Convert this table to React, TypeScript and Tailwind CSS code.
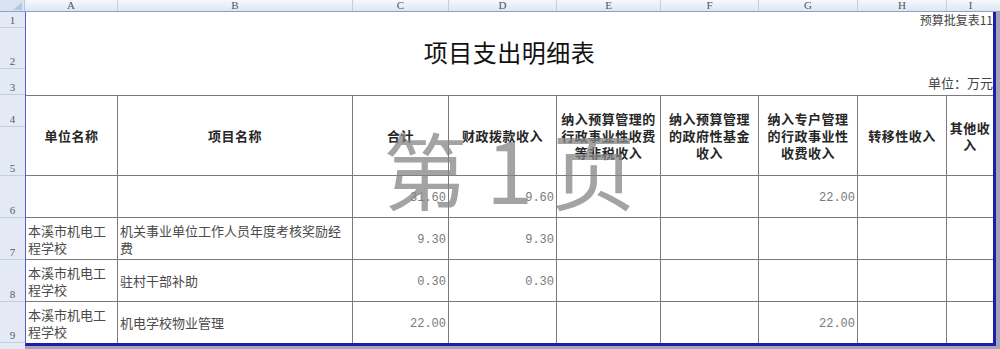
import React from "react";

const cjk = { fontFamily: '"Noto Sans CJK SC", "Noto Sans", sans-serif' };
const mono = { fontFamily: '"Liberation Mono", "DejaVu Sans Mono", monospace' };
const serif = { fontFamily: '"Liberation Serif", "DejaVu Serif", serif' };

const colHeaders: { label: string; w: string }[] = [
  { label: "A", w: "w-[93px]" },
  { label: "B", w: "w-[235px]" },
  { label: "C", w: "w-[96px]" },
  { label: "D", w: "w-[108px]" },
  { label: "E", w: "w-[104px]" },
  { label: "F", w: "w-[98px]" },
  { label: "G", w: "w-[99px]" },
  { label: "H", w: "w-[89px]" },
];

const rowHeaders: { label: string; h: string }[] = [
  { label: "1", h: "h-[16px]" },
  { label: "2", h: "h-[41px]" },
  { label: "3", h: "h-[26px]" },
  { label: "4", h: "h-[32px]" },
  { label: "5", h: "h-[49px]" },
  { label: "6", h: "h-[42px]" },
  { label: "7", h: "h-[42px]" },
  { label: "8", h: "h-[42px]" },
  { label: "9", h: "h-[41px]" },
];

type Row = {
  unit: string[];
  name: string[];
  c: string;
  d: string;
  g: string;
};

const rows: Row[] = [
  { unit: [], name: [], c: "31.60", d: "9.60", g: "22.00" },
  {
    unit: ["本溪市机电工", "程学校"],
    name: ["机关事业单位工作人员年度考核奖励经", "费"],
    c: "9.30",
    d: "9.30",
    g: "",
  },
  { unit: ["本溪市机电工", "程学校"], name: ["驻村干部补助"], c: "0.30", d: "0.30", g: "" },
  { unit: ["本溪市机电工", "程学校"], name: ["机电学校物业管理"], c: "22.00", d: "", g: "22.00" },
];

function HeadCell({ lines, last }: { lines: string[]; last?: boolean }) {
  return (
    <div
      className={`flex flex-col items-center justify-center border-t border-b border-[#7a7a7a] text-[13px] leading-[17px] font-bold text-[#262626] tracking-[0.5px] text-center ${
        last ? "" : "border-r"
      }`}
      style={cjk}
    >
      {lines.map((l, i) => (
        <span key={i} className="whitespace-nowrap">
          {l}
        </span>
      ))}
    </div>
  );
}

function TextCell({ lines, last, bottom }: { lines: string[]; last?: boolean; bottom?: boolean }) {
  return (
    <div
      className={`flex flex-col justify-center pl-[2px] text-[13px] leading-[17px] text-[#4a4a4a] border-[#7a7a7a] ${
        last ? "" : "border-r"
      } ${bottom ? "" : "border-b"}`}
      style={cjk}
    >
      {lines.map((l, i) => (
        <span key={i} className="whitespace-nowrap">
          {l}
        </span>
      ))}
    </div>
  );
}

function NumCell({ v, last, bottom }: { v: string; last?: boolean; bottom?: boolean }) {
  return (
    <div
      className={`flex items-center justify-end pr-[2px] pt-[2px] text-[12px] text-[#7a7a7a] border-[#7a7a7a] ${
        last ? "" : "border-r"
      } ${bottom ? "" : "border-b"}`}
      style={mono}
    >
      {v}
    </div>
  );
}

export default function App() {
  return (
    <div className="w-[1000px] h-[349px] bg-[#a4a4b8] flex flex-col overflow-hidden">
      {/* column header bar */}
      <div className="flex h-[12px] shrink-0 border-b border-[#8e9fc8] bg-gradient-to-b from-[#f6f9fd] to-[#dde6f1]">
        <div className="w-[25px] h-full border-r border-[#b9c7da] bg-[#d9e4f2] relative">
          <svg className="absolute right-[2px] bottom-[1px]" width="9" height="8" viewBox="0 0 9 8">
            <polygon points="9,0 9,8 0,8" fill="#b6c8de" />
          </svg>
        </div>
        {colHeaders.map((c) => (
          <div
            key={c.label}
            className={`${c.w} h-full border-r border-[#c3cfde] flex items-center justify-center text-[11px] leading-[11px] text-[#555]`}
            style={serif}
          >
            {c.label}
          </div>
        ))}
        <div
          className="flex-1 h-full flex items-center justify-center text-[11px] leading-[11px] text-[#555] pr-[6px]"
          style={serif}
        >
          I
        </div>
      </div>

      <div className="flex flex-1">
        {/* row headers */}
        <div className="w-[25px] flex flex-col bg-[#e3eaf5]">
          {rowHeaders.map((r) => (
            <div
              key={r.label}
              className={`${r.h} border-b border-[#c3cedd] flex items-end justify-center text-[11px] leading-[13px] text-[#5a5a5a]`}
              style={serif}
            >
              {r.label}
            </div>
          ))}
          <div className="flex-1" />
        </div>

        {/* page */}
        <div className="relative w-[971px] h-[334px] bg-white border-l border-l-[#5a5ad0] border-r-[3px] border-b-[3px] border-r-[#1e1eaa] border-b-[#1e1eaa]">
          <div className="grid grid-cols-[92px_235px_96px_108px_104px_98px_99px_89px_46px] grid-rows-[16px_41px_26px_81px_42px_42px_42px_41px]">
            <div
              className="col-span-9 flex items-center justify-end text-[12px] leading-[14px] text-[#444]"
              style={cjk}
            >
              预算批复表11
            </div>
            <div
              className="col-span-9 flex items-end justify-center pb-[2px] text-[24px] leading-[30px] text-[#111] tracking-[0.5px]"
              style={cjk}
            >
              项目支出明细表
            </div>
            <div
              className="col-span-9 flex items-center justify-end pt-[1px] text-[13px] leading-[15px] text-[#444]"
              style={cjk}
            >
              单位：万元
            </div>

            <HeadCell lines={["单位名称"]} />
            <HeadCell lines={["项目名称"]} />
            <HeadCell lines={["合计"]} />
            <HeadCell lines={["财政拨款收入"]} />
            <HeadCell lines={["纳入预算管理的", "行政事业性收费", "等非税收入"]} />
            <HeadCell lines={["纳入预算管理", "的政府性基金", "收入"]} />
            <HeadCell lines={["纳入专户管理", "的行政事业性", "收费收入"]} />
            <HeadCell lines={["转移性收入"]} />
            <HeadCell lines={["其他收", "入"]} last />

            {rows.map((r, i) => {
              const bottom = i === rows.length - 1;
              return (
                <React.Fragment key={i}>
                  <TextCell lines={r.unit} bottom={bottom} />
                  <TextCell lines={r.name} bottom={bottom} />
                  <NumCell v={r.c} bottom={bottom} />
                  <NumCell v={r.d} bottom={bottom} />
                  <NumCell v="" bottom={bottom} />
                  <NumCell v="" bottom={bottom} />
                  <NumCell v={r.g} bottom={bottom} />
                  <NumCell v="" bottom={bottom} />
                  <NumCell v="" bottom={bottom} last />
                </React.Fragment>
              );
            })}
          </div>

          {/* page watermark */}
          <div
            className="absolute inset-x-0 top-[114px] text-center text-[84px] leading-[84px] text-[#858585] opacity-75 pointer-events-none whitespace-pre"
            style={cjk}
          >
            第 1 页
          </div>
        </div>
      </div>
    </div>
  );
}
